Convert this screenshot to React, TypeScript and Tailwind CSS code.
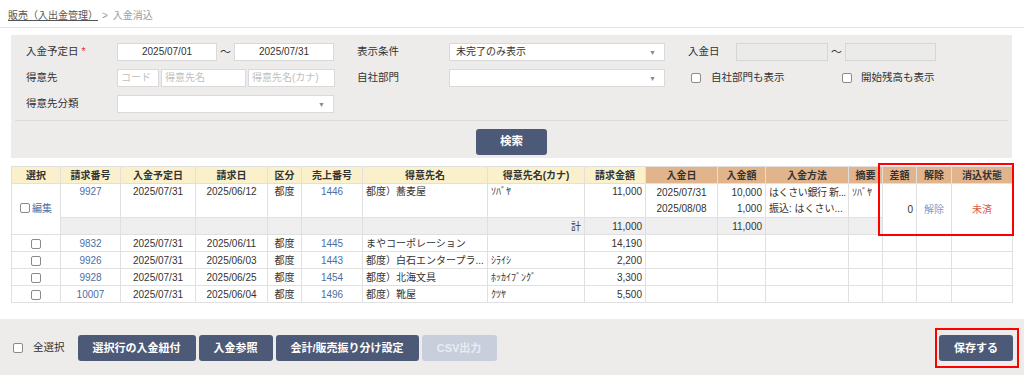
import React from "react";

const FONT = "font-['Liberation_Sans','Noto_Sans_CJK_JP',sans-serif]";

function Box({ className = "" }: { className?: string }) {
  return (
    <span
      className={
        "inline-block w-[10px] h-[10px] border border-[#8a8a8a] rounded-[2px] bg-white align-middle " +
        className
      }
    />
  );
}

function Arrow() {
  return <span className="absolute right-[8px] top-[4px] text-[7px] text-[#8a8a8a] leading-[10px]">▼</span>;
}

const inputCls = "h-[18px] bg-white border border-[#d9d9d9] text-[10px] leading-[16px]";
const disabledCls = "h-[18px] bg-[#ebebea] border border-[#d6d6d6]";

const TD = "border border-[#e0e0e0] px-[3px] h-[17px] leading-[15px] whitespace-nowrap overflow-hidden text-[10px]";
const THY = "border border-[#e0e0e0] bg-[#faf0c9] font-bold text-center h-[17px] leading-[15px] text-[10px]";
const THT = "border border-[#e0e0e0] bg-[#e2b48b] font-bold text-center h-[17px] leading-[15px] text-[10px]";
const LINK = "text-[#4a6fa8]";

const widths = [49, 60, 75, 72, 34, 61, 125, 97, 61, 72, 48, 83, 34, 34, 35, 61];

const rows = [
  { no: "9832", due: "2025/07/31", inv: "2025/06/11", sale: "1445", name: "まやコーポレーション", kana: "", amt: "14,190" },
  { no: "9926", due: "2025/07/31", inv: "2025/06/03", sale: "1443", name: "都度）白石エンタープラ...", kana: "ｼﾗｲｼ", amt: "2,200" },
  { no: "9928", due: "2025/07/31", inv: "2025/06/25", sale: "1454", name: "都度）北海文具", kana: "ﾎｯｶｲﾌﾞﾝｸﾞ", amt: "3,300" },
  { no: "10007", due: "2025/07/31", inv: "2025/06/04", sale: "1496", name: "都度）靴屋", kana: "ｸﾂﾔ", amt: "5,500" },
];

export default function App() {
  return (
    <div className={"relative w-[1024px] h-[375px] overflow-hidden bg-white text-[#333] " + FONT}>
      {/* breadcrumb */}
      <div className="h-[28px] border-b border-[#e2e2e2] flex items-center pl-[8px] pt-[3px] text-[10px]">
        <span className="underline text-[#555]">販売（入出金管理）</span>
        <span className="text-[#9a9a9a] ml-[4px]">&gt;</span>
        <span className="text-[#9a9a9a] ml-[5px]">入金消込</span>
      </div>

      {/* search panel */}
      <div className="mt-[7px] ml-[11px] w-[1001px] bg-[#edecea]">
        <div className="pt-[8px] pb-[7px] flex flex-col gap-[8px] pl-[15px] text-[10.5px]">
          {/* row 1 */}
          <div className="flex items-center h-[18px]">
            <div className="w-[91px]">
              入金予定日<span className="text-[#e03030] ml-[3px]">*</span>
            </div>
            <div className={inputCls + " w-[100px] text-center"}>2025/07/01</div>
            <div className="w-[17px] text-center text-[11px]">〜</div>
            <div className={inputCls + " w-[100px] text-center"}>2025/07/31</div>
            <div className="w-[23px]" />
            <div className="w-[92px]">表示条件</div>
            <div className={inputCls + " relative w-[216px] pl-[6px]"}>
              未完了のみ表示
              <Arrow />
            </div>
            <div className="w-[23px]" />
            <div className="w-[48px]">入金日</div>
            <div className={disabledCls + " w-[92px]"} />
            <div className="w-[17px] text-center text-[11px]">〜</div>
            <div className={disabledCls + " w-[91px]"} />
          </div>
          {/* row 2 */}
          <div className="flex items-center h-[18px]">
            <div className="w-[91px]">得意先</div>
            <div className={inputCls + " w-[42px] pl-[3px] text-[#c0c0c0]"}>コード</div>
            <div className={inputCls + " w-[85px] ml-[2px] pl-[3px] text-[#c0c0c0]"}>得意先名</div>
            <div className={inputCls + " w-[87px] ml-[2px] pl-[3px] text-[#c0c0c0]"}>得意先名(カナ)</div>
            <div className="w-[22px]" />
            <div className="w-[92px]">自社部門</div>
            <div className={inputCls + " relative w-[216px]"}>
              <Arrow />
            </div>
            <div className="w-[26px]" />
            <Box className="w-[9px] h-[9px]" />
            <div className="ml-[10px] w-[131px]">自社部門も表示</div>
            <Box className="w-[9px] h-[9px]" />
            <div className="ml-[9px]">開始残高も表示</div>
          </div>
          {/* row 3 */}
          <div className="flex items-center h-[18px]">
            <div className="w-[91px]">得意先分類</div>
            <div className={inputCls + " relative w-[217px]"}>
              <Arrow />
            </div>
          </div>
        </div>
        <div className="mx-[4px] h-px bg-[#dcdcdc]" />
        <div className="pt-[8px] pb-[3px] flex justify-center">
          <button className="w-[71px] h-[26px] rounded-[3px] bg-[#4d5a77] text-white font-bold text-[11.5px]">
            検索
          </button>
        </div>
      </div>

      {/* table */}
      <table className="mt-[8px] ml-[11px] table-fixed border-collapse w-[1001px]">
        <colgroup>
          {widths.map((w, i) => (
            <col key={i} style={{ width: w }} />
          ))}
        </colgroup>
        <thead>
          <tr>
            <th className={THY}>選択</th>
            <th className={THY}>請求番号</th>
            <th className={THY}>入金予定日</th>
            <th className={THY}>請求日</th>
            <th className={THY}>区分</th>
            <th className={THY}>売上番号</th>
            <th className={THY}>得意先名</th>
            <th className={THY}>得意先名(カナ)</th>
            <th className={THY}>請求金額</th>
            <th className={THT}>入金日</th>
            <th className={THT}>入金額</th>
            <th className={THT}>入金方法</th>
            <th className={THT}>摘要</th>
            <th className={THT}>差額</th>
            <th className={THT}>解除</th>
            <th className={THT}>消込状態</th>
          </tr>
        </thead>
        <tbody>
          <tr>
            <td rowSpan={3} className={TD + " text-center align-middle"}>
              <span className="inline-flex items-center gap-[2px]">
                <Box className="w-[9px] h-[9px]" />
                <span className={LINK}>編集</span>
              </span>
            </td>
            <td rowSpan={2} className={TD + " text-center align-top " + LINK}>9927</td>
            <td rowSpan={2} className={TD + " text-center align-top"}>2025/07/31</td>
            <td rowSpan={2} className={TD + " text-center align-top"}>2025/06/12</td>
            <td rowSpan={2} className={TD + " text-center align-top"}>都度</td>
            <td rowSpan={2} className={TD + " text-center align-top " + LINK}>1446</td>
            <td rowSpan={2} className={TD + " text-left align-top"}>都度）蕎麦屋</td>
            <td rowSpan={2} className={TD + " text-left align-top"}>ｿﾊﾞﾔ</td>
            <td rowSpan={2} className={TD + " text-right align-top"}>11,000</td>
            <td className={TD + " text-center border-b-0"}>2025/07/31</td>
            <td className={TD + " text-right border-b-0"}>10,000</td>
            <td className={TD + " text-left border-b-0 px-[1px] tracking-[-0.4px]"}>はくさい銀行 新...</td>
            <td className={TD + " text-left border-b-0 px-[2px]"}>ｿﾊﾞﾔ</td>
            <td rowSpan={3} className={TD + " text-right align-middle"}>0</td>
            <td rowSpan={3} className={TD + " text-center align-middle text-[#7d9dc9]"}>解除</td>
            <td rowSpan={3} className={TD + " text-center align-middle text-[#e05a45]"}>未済</td>
          </tr>
          <tr>
            <td className={TD + " text-center border-t-0"}>2025/08/08</td>
            <td className={TD + " text-right border-t-0"}>1,000</td>
            <td className={TD + " text-left border-t-0 px-[2px]"}>振込: はくさい...</td>
            <td className={TD + " border-t-0"} />
          </tr>
          <tr className="bg-[#efefef]">
            <td className={TD} />
            <td className={TD} />
            <td className={TD} />
            <td className={TD} />
            <td className={TD} />
            <td className={TD} />
            <td className={TD + " text-right"}>計</td>
            <td className={TD + " text-right"}>11,000</td>
            <td className={TD} />
            <td className={TD + " text-right"}>11,000</td>
            <td className={TD} />
            <td className={TD} />
          </tr>
          {rows.map((r) => (
            <tr key={r.no}>
              <td className={TD + " text-center"}>
                <Box className="w-[9px] h-[9px]" />
              </td>
              <td className={TD + " text-center " + LINK}>{r.no}</td>
              <td className={TD + " text-center"}>{r.due}</td>
              <td className={TD + " text-center"}>{r.inv}</td>
              <td className={TD + " text-center"}>都度</td>
              <td className={TD + " text-center " + LINK}>{r.sale}</td>
              <td className={TD + " text-left"}>{r.name}</td>
              <td className={TD + " text-left"}>{r.kana}</td>
              <td className={TD + " text-right"}>{r.amt}</td>
              <td className={TD} />
              <td className={TD} />
              <td className={TD} />
              <td className={TD} />
              <td className={TD} />
              <td className={TD} />
              <td className={TD} />
            </tr>
          ))}
        </tbody>
      </table>

      {/* footer */}
      <div className="absolute left-0 right-0 bottom-0 h-[56px] bg-[#edecea] flex items-center pl-[13px] pr-[11px] pt-[2px]">
        <Box className="w-[9px] h-[9px]" />
        <span className="ml-[10px] text-[10.5px]">全選択</span>
        <div className="ml-[13px] flex gap-[3px]">
          <button className="w-[118px] h-[26px] rounded-[3px] bg-[#4d5a77] text-white font-bold text-[11px]">
            選択行の入金紐付
          </button>
          <button className="w-[74px] h-[26px] rounded-[3px] bg-[#4d5a77] text-white font-bold text-[11px]">
            入金参照
          </button>
          <button className="w-[143px] h-[26px] rounded-[3px] bg-[#4d5a77] text-white font-bold text-[11px]">
            会計/販売振り分け設定
          </button>
          <button className="w-[75px] h-[26px] rounded-[3px] bg-[#c8cedc] text-[#e9ecf3] font-bold text-[11px]">
            CSV出力
          </button>
        </div>
        <button className="ml-auto w-[74px] h-[26px] rounded-[3px] bg-[#4d5a77] text-white font-bold text-[11px]">
          保存する
        </button>
      </div>

      {/* highlight boxes */}
      <div className="absolute left-[878px] top-[163px] w-[136px] h-[73px] border-2 border-[#ff0000] pointer-events-none" />
      <div className="absolute left-[935px] top-[328px] w-[84px] h-[40px] border-2 border-[#ff0000] pointer-events-none" />
    </div>
  );
}
